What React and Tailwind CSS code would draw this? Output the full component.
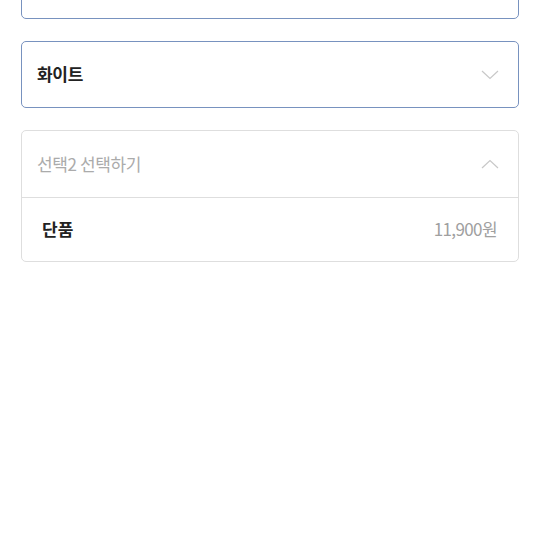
import React from "react";

const Chevron = ({ up }) => (
  <svg width="18" height="10" viewBox="0 0 18 10" fill="none" className="block">
    {up ? (
      <path d="M1 9 L9 1.5 L17 9" stroke="#c8c8c8" strokeWidth="1.2" />
    ) : (
      <path d="M1 1 L9 8.5 L17 1" stroke="#c8c8c8" strokeWidth="1.2" />
    )}
  </svg>
);

export default function App() {
  return (
    <div
      className="w-[540px] h-[540px] bg-white overflow-hidden px-[21px]"
      style={{ fontFamily: '"Noto Sans CJK KR", "Noto Sans", sans-serif' }}
    >
      <div className="flex flex-col gap-[22px]">
        <div className="-mt-[49px] h-[68px] border border-[#7892bf] rounded-[5px] bg-white" />
        <div className="h-[67px] border border-[#7892bf] rounded-[5px] bg-white flex items-center justify-between pl-[15px] pr-[19px]">
          <span className="text-[17px] font-semibold text-[#222] tracking-[-0.3px] -mt-[1px]">화이트</span>
          <Chevron />
        </div>
        <div className="border border-[#dedede] rounded-[5px] bg-white">
          <div className="h-[67px] flex items-center justify-between pl-[15px] pr-[19px] border-b border-[#dedede]">
            <span className="text-[17px] text-[#ababab] tracking-[-0.4px] -mt-[1px]">선택2 선택하기</span>
            <Chevron up />
          </div>
          <div className="h-[63px] flex items-center justify-between pl-[20px] pr-[21px]">
            <span className="text-[17px] font-semibold text-[#222] -mt-[1px]">단품</span>
            <span className="text-[17px] text-[#a0a0a0] tracking-[-0.6px] -mt-[1px]">11,900원</span>
          </div>
        </div>
      </div>
    </div>
  );
}
